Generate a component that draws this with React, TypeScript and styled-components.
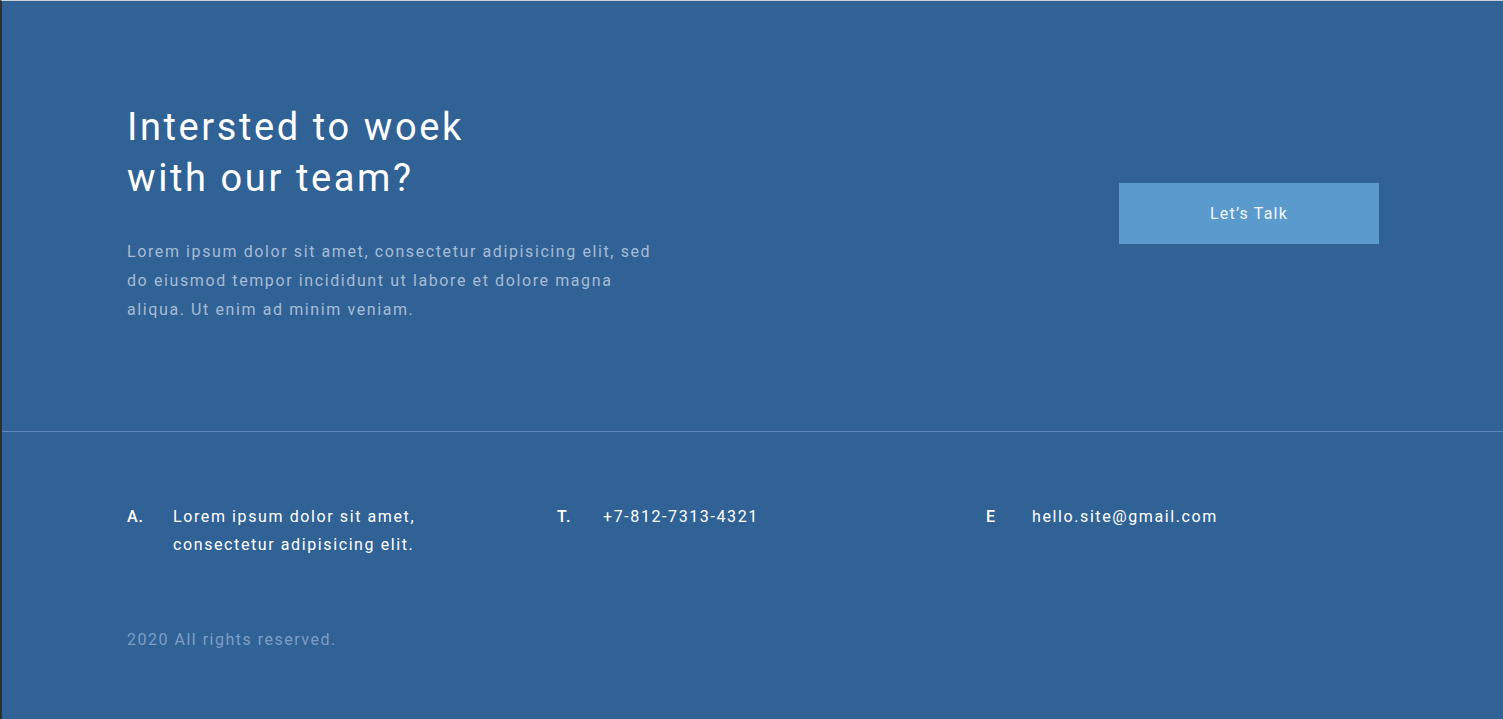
import React from "react";
import styled, { createGlobalStyle } from "styled-components";

const Global = createGlobalStyle`
  html, body { margin: 0; padding: 0; background: #306296; }
  body { font-family: Roboto, "Liberation Sans", sans-serif; -webkit-font-smoothing: antialiased; }
  * { box-sizing: border-box; }
`;

const Page = styled.div`
  min-height: 719px;
  background: #306296;
  border-top: 1px solid #c9d0da;
  border-left: 2px solid #2e2e30;
  color: #fff;
`;

const Hero = styled.section`
  display: flex;
  justify-content: space-between;
  align-items: flex-start;
  padding: 101px 124px 107px 125px;
  border-bottom: 1px solid #5d87b8;
`;

const Intro = styled.div`
  display: flex;
  flex-direction: column;
`;

const Title = styled.h1`
  margin: 0;
  font-weight: 400;
  font-size: 38px;
  line-height: 51px;
  letter-spacing: 2.6px;
  color: #ffffff;
`;

const Lead = styled.p`
  margin: 33px 0 0;
  width: 540px;
  font-size: 16px;
  line-height: 29px;
  letter-spacing: 1.6px;
  color: #a7bcd6;
`;

const TalkButton = styled.button`
  margin-top: 81px;
  width: 260px;
  height: 61px;
  border: none;
  background: #5b9acd;
  color: #f2f6fb;
  font-family: Roboto, "Liberation Sans", sans-serif;
  font-size: 16px;
  letter-spacing: 1.2px;
  cursor: pointer;
`;

const Footer = styled.footer`
  padding: 71px 125px 60px;
`;

const Contacts = styled.div`
  display: grid;
  grid-template-columns: 430px 429px 1fr;
`;

const Contact = styled.div`
  display: flex;
  align-items: flex-start;
  font-size: 16px;
  line-height: 28px;
  letter-spacing: 1.6px;
`;

const Label = styled.span`
  width: 46px;
  flex-shrink: 0;
  font-weight: 500;
  letter-spacing: 1px;
`;

const Value = styled.span`
  color: #ffffff;
`;

const Copy = styled.p`
  margin: 67px 0 0;
  font-size: 16px;
  line-height: 28px;
  letter-spacing: 1.5px;
  color: #7e9ec6;
`;

export default function App() {
  return (
    <>
      <Global />
      <Page>
        <Hero>
          <Intro>
            <Title>
              Intersted to woek
              <br />
              with our team?
            </Title>
            <Lead>
              Lorem ipsum dolor sit amet, consectetur adipisicing elit, sed do
              eiusmod tempor incididunt ut labore et dolore magna aliqua. Ut
              enim ad minim veniam.
            </Lead>
          </Intro>
          <TalkButton>Let’s Talk</TalkButton>
        </Hero>
        <Footer>
          <Contacts>
            <Contact>
              <Label>A.</Label>
              <Value>
                Lorem ipsum dolor sit amet,
                <br />
                consectetur adipisicing elit.
              </Value>
            </Contact>
            <Contact>
              <Label>T.</Label>
              <Value>+7-812-7313-4321</Value>
            </Contact>
            <Contact>
              <Label>E</Label>
              <Value>hello.site@gmail.com</Value>
            </Contact>
          </Contacts>
          <Copy>2020 All rights reserved.</Copy>
        </Footer>
      </Page>
    </>
  );
}
